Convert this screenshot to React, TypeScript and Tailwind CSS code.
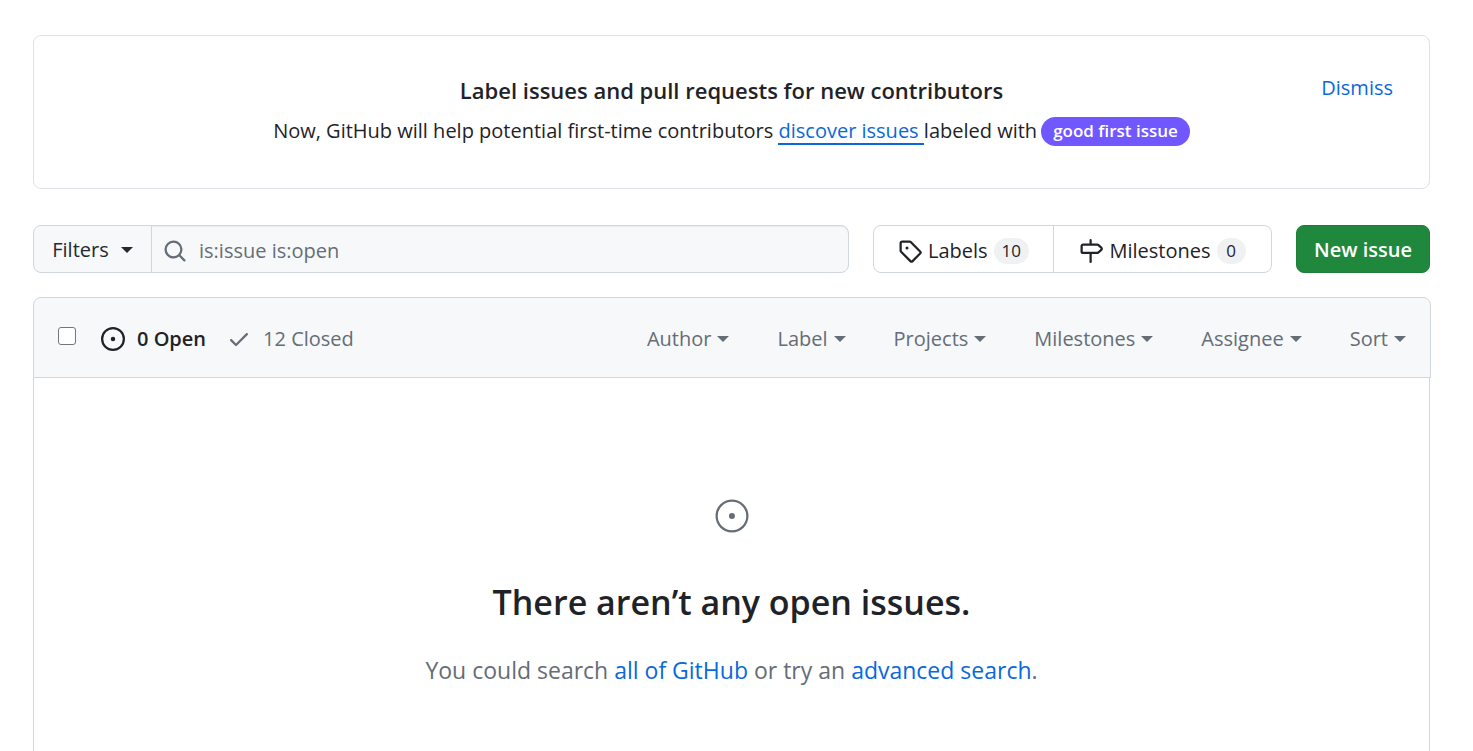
import type { ReactNode } from "react";

const issuePath =
  "M8 9.5a1.5 1.5 0 1 0 0-3 1.5 1.5 0 0 0 0 3ZM8 0a8 8 0 1 1 0 16A8 8 0 0 1 8 0ZM1.5 8a6.5 6.5 0 1 0 13 0 6.5 6.5 0 0 0-13 0Z";
const issueLargePath =
  "M12 1c6.075 0 11 4.925 11 11s-4.925 11-11 11S1 18.075 1 12 5.925 1 12 1ZM2.5 12a9.5 9.5 0 0 0 9.5 9.5 9.5 9.5 0 0 0 9.5-9.5A9.5 9.5 0 0 0 12 2.5 9.5 9.5 0 0 0 2.5 12Zm9.5 2a2 2 0 1 1-.001-3.999A2 2 0 0 1 12 14Z";
const tagPath =
  "M1 7.775V2.75C1 1.784 1.784 1 2.75 1h5.025c.464 0 .91.184 1.238.513l6.25 6.25a1.75 1.75 0 0 1 0 2.474l-5.026 5.026a1.75 1.75 0 0 1-2.474 0l-6.25-6.25A1.752 1.752 0 0 1 1 7.775Zm1.5 0c0 .066.026.13.073.177l6.25 6.25a.25.25 0 0 0 .354 0l5.025-5.025a.25.25 0 0 0 0-.354l-6.25-6.25a.25.25 0 0 0-.177-.073H2.75a.25.25 0 0 0-.25.25ZM6 5a1 1 0 1 1 0 2 1 1 0 0 1 0-2Z";
const milestonePath =
  "M7.75 0a.75.75 0 0 1 .75.75V3h3.634c.414 0 .814.147 1.13.414l2.07 1.75a1.75 1.75 0 0 1 0 2.672l-2.07 1.75a1.75 1.75 0 0 1-1.13.414H8.5v5.25a.75.75 0 0 1-1.5 0V10H2.75A1.75 1.75 0 0 1 1 8.25v-3.5C1 3.784 1.784 3 2.75 3H7V.75A.75.75 0 0 1 7.75 0Zm4.384 8.5a.25.25 0 0 0 .161-.06l2.07-1.75a.248.248 0 0 0 0-.38l-2.07-1.75a.25.25 0 0 0-.161-.06H2.75a.25.25 0 0 0-.25.25v3.5c0 .138.112.25.25.25h9.384Z";
const checkPath =
  "M13.78 4.22a.75.75 0 0 1 0 1.06l-7.25 7.25a.75.75 0 0 1-1.06 0L2.22 9.28a.751.751 0 0 1 .018-1.042.751.751 0 0 1 1.042-.018L6 10.94l6.72-6.72a.75.75 0 0 1 1.06 0Z";
const searchPath =
  "M10.68 11.74a6 6 0 0 1-7.922-8.982 6 6 0 0 1 8.982 7.922l3.04 3.04a.749.749 0 0 1-.326 1.275.749.749 0 0 1-.734-.215ZM11.5 7a4.499 4.499 0 1 0-8.997 0A4.499 4.499 0 0 0 11.5 7Z";

function Icon({ d }: { d: string }) {
  return (
    <svg aria-hidden="true" viewBox="0 0 16 16" className="size-6 shrink-0 fill-current">
      <path d={d} />
    </svg>
  );
}

function Caret() {
  return (
    <svg aria-hidden="true" viewBox="0 0 12 6" className="h-[6px] w-3 shrink-0 fill-current">
      <path d="M0 0h12L6 6z" />
    </svg>
  );
}

function Counter({ children }: { children: ReactNode }) {
  return (
    <span className="flex h-[26px] min-w-[29px] items-center justify-center rounded-full bg-[#eff1f3] px-2 text-[17px] font-medium">
      {children}
    </span>
  );
}

const menus = ["Author", "Label", "Projects", "Milestones", "Assignee", "Sort"];

export default function App() {
  return (
    <main className="flex min-h-screen flex-col gap-6 bg-white pt-[35px] pr-[43px] pl-[33px] font-['Open_Sans',sans-serif] text-[20px] leading-[30px] text-[#1f2328]">
      <section className="relative mb-3 rounded-lg border border-[#dfe3e8] px-9 pt-[38px] pb-10 text-center">
        <h2 className="text-[22px] leading-[32px] font-semibold">
          Label issues and pull requests for new contributors
        </h2>
        <p className="mt-2 flex items-center justify-center leading-[34px]">
          <span className="whitespace-pre">Now, GitHub will help potential first-time contributors </span>
          <a href="#discover" className="h-7 border-b-2 border-[#0969da] leading-[28px] whitespace-pre text-[#0969da]">
            discover issues{" "}
          </a>
          <span>labeled with</span>
          <span className="ml-1 flex h-[29px] items-center rounded-full bg-[#7057ff] px-3 text-[17px] font-semibold text-white">
            good first issue
          </span>
        </p>
        <button type="button" className="absolute top-[37px] right-9 text-[#0969da]">
          Dismiss
        </button>
      </section>

      <div className="flex h-12 gap-6">
        <div className="flex flex-1 rounded-lg border border-[#d0d7de] bg-[#f6f8fa]">
          <button
            type="button"
            className="flex w-[118px] items-center justify-center gap-3 border-r border-[#d0d7de] pt-[2px] font-medium text-[#24292f]"
          >
            Filters
            <Caret />
          </button>
          <label className="flex flex-1 items-center gap-3 rounded-r-lg pt-[3px] pl-[11px] text-[#656d76] shadow-[inset_0_1px_0_rgba(208,215,222,0.3)]">
            <Icon d={searchPath} />
            <input
              type="text"
              aria-label="Search all issues"
              defaultValue="is:issue is:open"
              className="min-w-0 flex-1 bg-transparent outline-none"
            />
          </label>
        </div>
        <nav aria-label="Issue metadata" className="flex rounded-lg border border-[#d0d7de] pt-0 font-medium">
          <a href="#labels" className="flex w-[180px] items-center justify-center gap-[6px] border-r border-[#d0d7de] pt-[3px]">
            <Icon d={tagPath} />
            Labels
            <Counter>10</Counter>
          </a>
          <a href="#milestones" className="flex w-[217px] items-center justify-center gap-[6px] pt-[3px]">
            <Icon d={milestonePath} />
            Milestones
            <Counter>0</Counter>
          </a>
        </nav>
        <a
          href="#new"
          className="flex w-[134px] items-center justify-center rounded-lg border border-[#1f7f3a] bg-[#1f883d] pt-[2px] font-semibold text-white"
        >
          New issue
        </a>
      </div>

      <section className="flex flex-1 flex-col">
        <header className="-mr-px flex h-[81px] items-center rounded-t-lg border border-[#d0d7de] bg-[#f6f8fa] px-6 pt-[2px] text-[#656d76]">
          <input
            type="checkbox"
            aria-label="Select all issues"
            className="mb-[6px] size-[18px] appearance-none rounded-[3px] border border-[#767676] bg-white"
          />
          <a href="#open" className="ml-[25px] flex items-center gap-3 font-semibold text-[#1f2328]">
            <Icon d={issuePath} />0 Open
          </a>
          <a href="#closed" className="ml-[21px] flex items-center gap-3">
            <Icon d={checkPath} />
            12 Closed
          </a>
          <div className="ml-auto flex gap-12">
            {menus.map((menu) => (
              <button key={menu} type="button" className="flex items-center gap-[6px]">
                {menu}
                <Caret />
              </button>
            ))}
          </div>
        </header>
        <div className="flex flex-1 flex-col items-center border-x border-[#d0d7de] pt-[120px] pb-12 text-center">
          <svg aria-hidden="true" viewBox="0 0 24 24" className="size-9 fill-[#656d76]">
            <path d={issueLargePath} />
          </svg>
          <h3 className="mt-[44px] text-[34px] leading-[48px] font-semibold">There aren’t any open issues.</h3>
          <p className="mt-[26px] text-[23px] leading-[36px] text-[#656d76]">
            You could search{" "}
            <a href="#all" className="text-[#0969da]">
              all of GitHub
            </a>{" "}
            or try an{" "}
            <a href="#advanced" className="text-[#0969da]">
              advanced search
            </a>
            .
          </p>
        </div>
      </section>
    </main>
  );
}
